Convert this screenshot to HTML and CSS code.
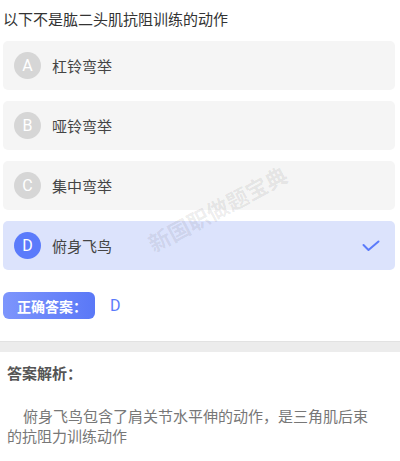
FILE: index.html
```html
<!DOCTYPE html>
<html lang="zh-CN">
<head>
<meta charset="utf-8">
<link rel="stylesheet" href="styles.css">
</head>
<body>
<div class="page">
  <div class="question">
    <div class="title">以下不是肱二头肌抗阻训练的动作</div>
    <div class="options">
      <div class="option"><span class="letter">A</span><span class="text">杠铃弯举</span></div>
      <div class="option"><span class="letter">B</span><span class="text">哑铃弯举</span></div>
      <div class="option"><span class="letter">C</span><span class="text">集中弯举</span></div>
      <div class="option selected"><span class="letter">D</span><span class="text">俯身飞鸟</span>
        <svg class="check" width="18" height="12" viewBox="0 0 18 12"><polyline points="1.5,5 6.5,10 16.5,1.5" fill="none" stroke="#5b7bfb" stroke-width="2" stroke-linecap="round" stroke-linejoin="round"/></svg>
      </div>
    </div>
    <div class="answer-row">
      <span class="answer-btn">正确答案：</span>
      <span class="answer-val">D</span>
    </div>
    <div class="watermark">新国职做题宝典</div>
  </div>
  <div class="sep"></div>
  <div class="analysis">
    <div class="analysis-title">答案解析：</div>
    <div class="analysis-text">俯身飞鸟包含了肩关节水平伸的动作，是三角肌后束的抗阻力训练动作</div>
  </div>
  <div class="sep bottom"></div>
</div>
</body>
</html>
```

FILE: styles.css
```css
html, body {
  margin: 0;
  padding: 0;
  background: #fff;
}
body {
  font-family: "Noto Sans CJK SC", "Liberation Sans", sans-serif;
  color: #333;
  width: 400px;
  overflow: hidden;
}
.question {
  position: relative;
  padding: 8px 5px 0 3px;
}
.title {
  font-size: 15px;
  line-height: 22px;
  color: #333;
}
.options {
  margin-top: 11px;
  display: flex;
  flex-direction: column;
  gap: 11px;
}
.option {
  height: 49px;
  background: #f5f5f5;
  border-radius: 5px;
  display: flex;
  align-items: center;
  padding-left: 11px;
  box-sizing: border-box;
}
.letter {
  width: 27px;
  height: 27px;
  border-radius: 50%;
  background: #d6d6d6;
  color: #fff;
  font-family: Roboto, "Liberation Sans", sans-serif;
  font-size: 16px;
  display: flex;
  align-items: center;
  justify-content: center;
  flex: none;
}
.text {
  margin-left: 11px;
  font-size: 15px;
  color: #444;
}
.selected {
  background: #dce3fc;
}
.selected .letter {
  background: #5b7bfb;
}
.check {
  margin-left: auto;
  margin-right: 15px;
}
.answer-row {
  margin-top: 22px;
  display: flex;
  align-items: center;
  height: 27px;
}
.answer-btn {
  width: 92px;
  height: 27px;
  border-radius: 6px;
  background: linear-gradient(90deg, #7d95fc, #5a78f7);
  color: #fff;
  font-size: 14px;
  font-weight: bold;
  display: flex;
  align-items: center;
  padding-left: 14px;
  box-sizing: border-box;
}
.answer-val {
  margin-left: 15px;
  color: #5b7bfb;
  font-family: Roboto, "Liberation Sans", sans-serif;
  font-size: 16px;
}
.watermark {
  position: absolute;
  left: 140px;
  top: 192px;
  font-size: 22px;
  font-weight: bold;
  color: rgba(0, 0, 0, 0.08);
  transform: rotate(-28deg);
  white-space: nowrap;
  pointer-events: none;
}
.sep {
  margin-top: 22px;
  height: 11px;
  background: #ececec;
  border-top: 1px solid #e2e2e2;
  box-sizing: border-box;
}
.analysis {
  padding: 10px 25px 0 7px;
}
.analysis-title {
  font-size: 15px;
  font-weight: bold;
  color: #555;
  line-height: 22px;
}
.analysis-text {
  margin-top: 22px;
  font-size: 15px;
  line-height: 20px;
  color: #777;
  text-indent: 16px;
}
.sep.bottom {
  margin-top: 16px;
  height: 6px;
  border-top: none;
}
```
